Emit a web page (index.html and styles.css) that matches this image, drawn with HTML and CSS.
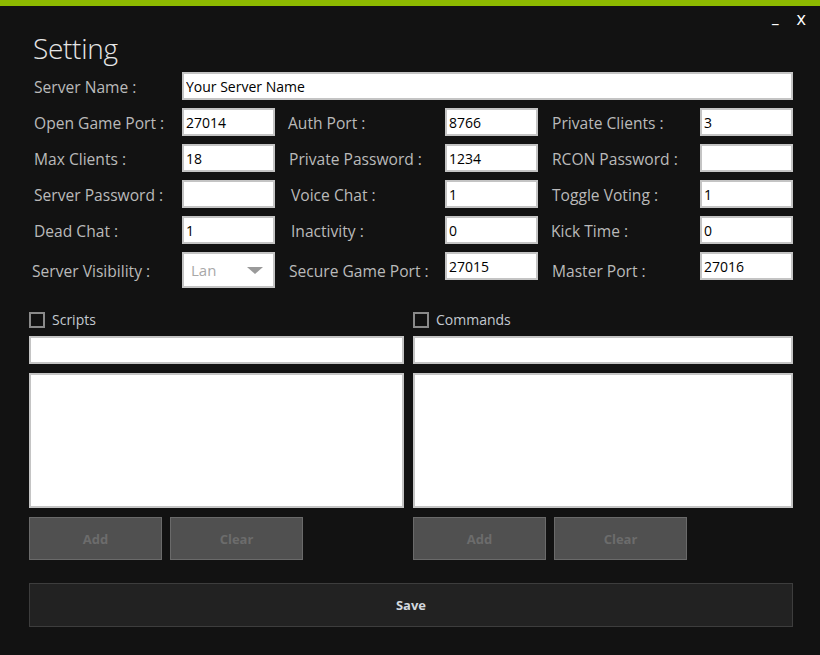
FILE: index.html
```html
<!DOCTYPE html>
<html>
<head>
<meta charset="utf-8">
<link rel="stylesheet" href="styles.css">
</head>
<body>
<div class="accent"></div>
<div class="window">
  <header class="header">
    <h1 class="title">Setting</h1>
    <div class="controls"><span class="ctl min">_</span><span class="ctl close">x</span></div>
  </header>

  <div class="fields">
    <label class="lbl">Server Name :</label>
    <input class="inp wide" value="Your Server Name">

    <label class="lbl">Open Game Port :</label>
    <input class="inp" value="27014">
    <label class="lbl mid">Auth Port :</label>
    <input class="inp" value="8766">
    <label class="lbl mid">Private Clients :</label>
    <input class="inp" value="3">

    <label class="lbl">Max Clients :</label>
    <input class="inp" value="18">
    <label class="lbl mid">Private Password :</label>
    <input class="inp" value="1234">
    <label class="lbl mid">RCON Password :</label>
    <input class="inp" value="">

    <label class="lbl">Server Password :</label>
    <input class="inp" value="">
    <label class="lbl mid shift">Voice Chat :</label>
    <input class="inp" value="1">
    <label class="lbl mid">Toggle Voting :</label>
    <input class="inp" value="1">

    <label class="lbl">Dead Chat :</label>
    <input class="inp" value="1">
    <label class="lbl mid shift">Inactivity :</label>
    <input class="inp" value="0">
    <label class="lbl mid">Kick Time :</label>
    <input class="inp" value="0">

    <label class="lbl left">Server Visibility :</label>
    <div class="select"><span>Lan</span><span class="arrow"></span></div>
    <label class="lbl mid">Secure Game Port :</label>
    <input class="inp top" value="27015">
    <label class="lbl mid">Master Port :</label>
    <input class="inp top" value="27016">
  </div>

  <div class="lists">
    <section class="panel">
      <div class="check"><span class="box"></span><span class="clabel">Scripts</span></div>
      <input class="inp line">
      <div class="listbox"></div>
      <div class="btns"><button class="btn">Add</button><button class="btn">Clear</button></div>
    </section>
    <section class="panel">
      <div class="check"><span class="box"></span><span class="clabel">Commands</span></div>
      <input class="inp line">
      <div class="listbox"></div>
      <div class="btns"><button class="btn">Add</button><button class="btn">Clear</button></div>
    </section>
  </div>

  <button class="save">Save</button>
</div>
</body>
</html>
```

FILE: styles.css
```css
* { box-sizing: border-box; }
html, body { margin: 0; padding: 0; }
body {
  background: #121212;
  font-family: "Open Sans", "Noto Sans", sans-serif;
  width: 820px;
  height: 655px;
  overflow: hidden;
}
.accent { height: 6px; background: #8cb900; }
.window { padding: 0 27px 0 29px; }
.header {
  display: flex;
  justify-content: space-between;
  align-items: flex-start;
  height: 66px;
}
.title {
  margin: 24px 0 0 4px;
  font-weight: 300;
  font-size: 28px;
  line-height: 36px;
  color: #e6e6e6;
  letter-spacing: -0.3px;
}
.controls {
  display: flex;
  gap: 18px;
  margin: 2px -13px 0 0;
  color: #ffffff;
  font-size: 18px;
  line-height: 20px;
}
.ctl.min { position: relative; top: -1px; font-weight: 700; font-size: 16px; }
.ctl.close { font-weight: 500; }

.fields {
  display: grid;
  grid-template-columns: 153px 93px 170px 93px 162px 93px;
  grid-template-rows: 28px 28px 28px 28px 28px 36px;
  row-gap: 8px;
}
.lbl {
  display: flex;
  align-items: center;
  padding-left: 5px;
  padding-top: 2px;
  color: #bababa;
  font-size: 15.6px;
  white-space: nowrap;
}
.lbl.mid { padding-left: 14px; }
.lbl.mid:nth-child(5n) { padding-left: 13px; }
.lbl.shift { padding-left: 16px; }
.lbl.left { padding-left: 3px; }
.inp {
  height: 28px;
  border: 2px solid #c4c4c4;
  background: #ffffff;
  color: #000;
  font-family: "Open Sans", "Noto Sans", sans-serif;
  font-size: 14px;
  padding: 0 2px;
  outline: none;
  width: 100%;
  margin: 0;
}
.inp.wide { grid-column: 2 / 7; }
.inp.top { align-self: start; }
.select {
  height: 36px;
  border: 2px solid #c4c4c4;
  background: #fff;
  display: flex;
  align-items: center;
  justify-content: space-between;
  padding: 0 10px 0 7px;
  color: #a8a8a8;
  font-size: 15px;
}
.arrow {
  width: 0; height: 0;
  border-left: 8px solid transparent;
  border-right: 8px solid transparent;
  border-top: 7px solid #9a9a9a;
}

.lists {
  display: grid;
  grid-template-columns: 375px 380px;
  column-gap: 9px;
  margin-top: 23px;
}
.panel { display: flex; flex-direction: column; }
.check { display: flex; align-items: center; height: 17px; }
.box {
  width: 16px; height: 16px;
  border: 2px solid #8a8a8a;
  background: transparent;
}
.clabel { margin-left: 7px; color: #c3c9d0; font-size: 14px; }
.inp.line { margin-top: 8px; }
.listbox {
  margin-top: 9px;
  height: 135px;
  background: #fff;
  border: 2px solid #c4c4c4;
}
.btns { display: flex; gap: 8px; margin-top: 9px; }
.btn {
  width: 133px;
  height: 43px;
  background: #505050;
  border: 1px solid #6a6a6a;
  color: #6c6c6c;
  font-family: "Open Sans", "Noto Sans", sans-serif;
  font-weight: 700;
  font-size: 13px;
  padding: 0;
}
.save {
  display: block;
  width: 764px;
  height: 44px;
  margin-top: 23px;
  background: #222222;
  border: 1px solid #3d3d3d;
  color: #d2d8de;
  font-family: "Open Sans", "Noto Sans", sans-serif;
  font-weight: 700;
  font-size: 13px;
}
```
